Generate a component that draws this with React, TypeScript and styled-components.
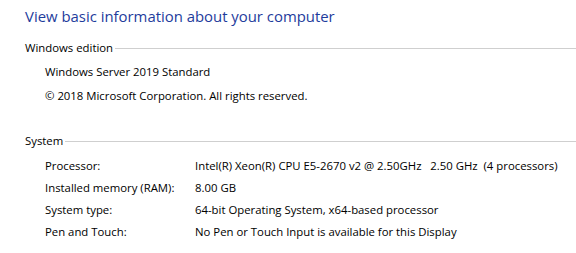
import React from "react";
import styled, { createGlobalStyle } from "styled-components";

const Global = createGlobalStyle`
  html, body { margin: 0; padding: 0; background: #ffffff; }
  body { font-family: "Open Sans", "Noto Sans", sans-serif; color: #000; }
`;

const Page = styled.div`
  width: 576px;
  height: 253px;
  overflow: hidden;
  box-sizing: border-box;
  padding: 6px 0 0 25px;
  display: flex;
  flex-direction: column;
`;

const Title = styled.h1`
  margin: 0;
  font-weight: 400;
  font-size: 14.9px;
  line-height: 21px;
  color: #1e3c9c;
  white-space: nowrap;
`;

const SectionHead = styled.div<{ $top: number }>`
  display: flex;
  align-items: center;
  margin-top: ${(p) => p.$top}px;
  height: 20px;
  font-size: 11.35px;
  white-space: nowrap;
`;

const Rule = styled.div`
  flex: 1;
  height: 1px;
  margin: 3px 0 0 2px;
  background: #cfcfcf;
`;

const Lines = styled.div`
  display: flex;
  flex-direction: column;
  padding-left: 20px;
  margin-top: 3px;
`;

const Line = styled.div`
  height: 24px;
  line-height: 24px;
  font-size: 11.35px;
  white-space: nowrap;
`;

const Grid = styled.div`
  display: grid;
  grid-template-columns: 150px 1fr;
  grid-auto-rows: 22px;
  padding-left: 20px;
  margin-top: 5px;
  font-size: 11.35px;
  line-height: 22px;
  white-space: nowrap;
`;

const Cell = styled.div``;

const systemRows: [string, string][] = [
  ["Processor:", "Intel(R) Xeon(R) CPU E5-2670 v2 @ 2.50GHz\u00a0\u00a0 2.50 GHz\u00a0 (4 processors)"],
  ["Installed memory (RAM):", "8.00 GB"],
  ["System type:", "64-bit Operating System, x64-based processor"],
  ["Pen and Touch:", "No Pen or Touch Input is available for this Display"],
];

export default function App() {
  return (
    <>
      <Global />
      <Page>
        <Title>View basic information about your computer</Title>
        <SectionHead $top={10}>
          Windows edition
          <Rule />
        </SectionHead>
        <Lines>
          <Line>Windows Server 2019 Standard</Line>
          <Line>© 2018 Microsoft Corporation. All rights reserved.</Line>
        </Lines>
        <SectionHead $top={22}>
          System
          <Rule />
        </SectionHead>
        <Grid>
          {systemRows.map(([k, v]) => (
            <React.Fragment key={k}>
              <Cell>{k}</Cell>
              <Cell>{v}</Cell>
            </React.Fragment>
          ))}
        </Grid>
      </Page>
    </>
  );
}
